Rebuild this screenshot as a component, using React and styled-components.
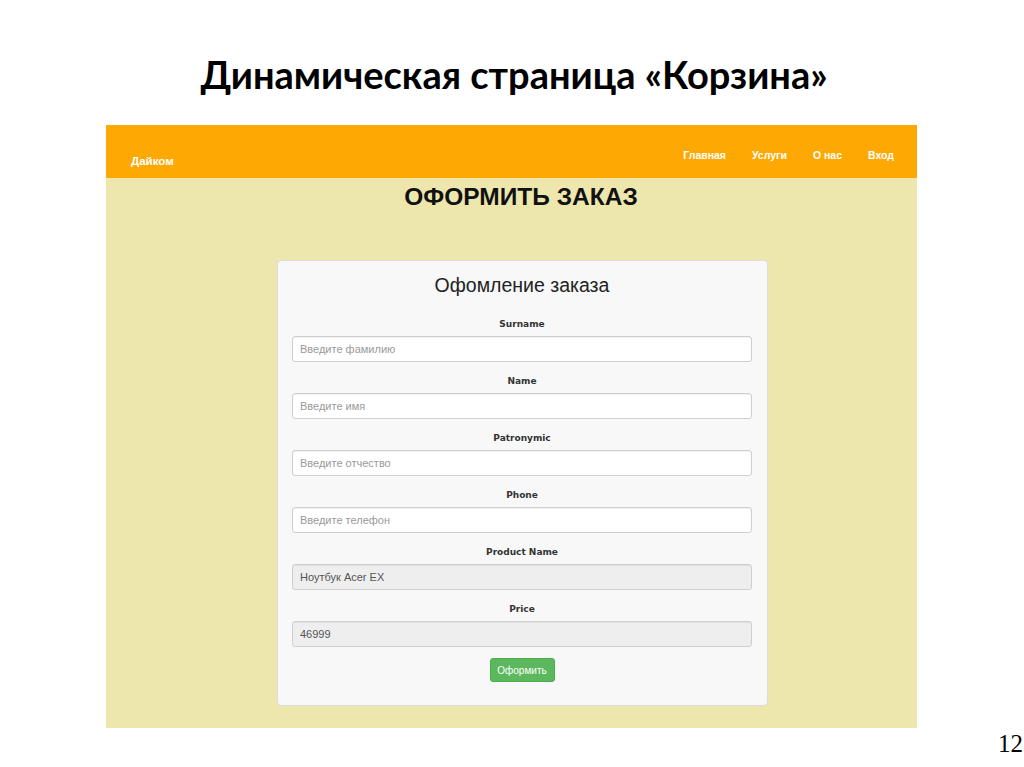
import React from "react";
import styled, { createGlobalStyle } from "styled-components";

const GlobalStyle = createGlobalStyle`
  html, body {
    margin: 0;
    padding: 0;
    background: #fff;
  }
`;

const fields = [
  { label: "Surname", placeholder: "Введите фамилию" },
  { label: "Name", placeholder: "Введите имя" },
  { label: "Patronymic", placeholder: "Введите отчество" },
  { label: "Phone", placeholder: "Введите телефон" },
  { label: "Product Name", value: "Ноутбук Acer EX", disabled: true },
  { label: "Price", value: "46999", disabled: true },
];

const links = ["Главная", "Услуги", "О нас", "Вход"];

export default function App() {
  return (
    <Slide>
      <GlobalStyle />
      <SlideTitle>Динамическая страница «Корзина»</SlideTitle>
      <Frame>
        <NavBar>
          <Brand>Дайком</Brand>
          <NavLinks>
            {links.map((l) => (
              <NavLink key={l}>{l}</NavLink>
            ))}
          </NavLinks>
        </NavBar>
        <Main>
          <PageHeading>ОФОРМИТЬ ЗАКАЗ</PageHeading>
          <Card>
            <CardTitle>Офомление заказа</CardTitle>
            {fields.map((f) => (
              <Group key={f.label}>
                <Label>{f.label}</Label>
                <Input
                  placeholder={f.placeholder}
                  defaultValue={f.value}
                  disabled={f.disabled}
                />
              </Group>
            ))}
            <SubmitButton>Оформить</SubmitButton>
          </Card>
        </Main>
      </Frame>
      <Footer>
        <PageNumber>12</PageNumber>
      </Footer>
    </Slide>
  );
}

const Slide = styled.div`
  width: 1024px;
  height: 767px;
  overflow: hidden;
  display: flex;
  flex-direction: column;
  background: #fff;
`;

const SlideTitle = styled.h1`
  margin: 53px 0 0;
  height: 43px;
  line-height: 43px;
  text-align: center;
  font-family: Lato, "Open Sans", sans-serif;
  font-weight: 700;
  font-size: 38px;
  color: #000;
  padding-left: 4px;
`;

const Frame = styled.div`
  margin: 29px 0 0 106px;
  width: 811px;
  height: 603px;
  background: #eee7ad;
  display: flex;
  flex-direction: column;
`;

const NavBar = styled.div`
  height: 53px;
  background: #fea803;
  display: flex;
  justify-content: space-between;
  align-items: flex-start;
  padding: 0 23px 0 25px;
  font-family: "Liberation Sans", Arial, sans-serif;
  font-weight: 700;
  color: #fff;
`;

const Brand = styled.div`
  padding-top: 30px;
  font-size: 11.5px;
  line-height: 12px;
`;

const NavLinks = styled.div`
  display: flex;
  gap: 26px;
  padding-top: 24px;
`;

const NavLink = styled.span`
  font-size: 10.5px;
  line-height: 12px;
`;

const Main = styled.div`
  display: flex;
  flex-direction: column;
  padding: 0 149px 0 171px;
`;

const PageHeading = styled.h2`
  margin: 4px 0 48px;
  height: 30px;
  line-height: 30px;
  text-align: center;
  font-family: "Liberation Sans", Arial, sans-serif;
  font-weight: 700;
  font-size: 24.5px;
  color: #111;
  padding-right: 3px;
`;

const Card = styled.div`
  background: #f8f8f8;
  border: 1px solid #dcdcdc;
  border-radius: 4px;
  padding: 12px 15px 23px 14px;
  display: flex;
  flex-direction: column;
`;

const CardTitle = styled.div`
  height: 24px;
  line-height: 24px;
  margin-bottom: 8px;
  text-align: center;
  font-family: "Liberation Sans", Arial, sans-serif;
  font-size: 19.5px;
  color: #222;
`;

const Group = styled.div`
  display: flex;
  flex-direction: column;
`;

const Label = styled.label`
  margin: 13px 0 6px;
  height: 12px;
  line-height: 12px;
  text-align: center;
  font-family: "DejaVu Sans", Verdana, sans-serif;
  font-weight: 700;
  font-size: 9px;
  color: #333;
`;

const Input = styled.input`
  box-sizing: border-box;
  height: 26px;
  width: 100%;
  padding: 0 7px;
  border: 1px solid #cfcfcf;
  border-radius: 3px;
  background: ${(p) => (p.disabled ? "#eeeeee" : "#fff")};
  box-shadow: inset 0 1px 1px rgba(0, 0, 0, 0.06);
  font-family: "Liberation Sans", Arial, sans-serif;
  font-size: 11px;
  color: #555;
  outline: none;

  &::placeholder {
    color: #9a9a9a;
  }
`;

const SubmitButton = styled.button`
  align-self: center;
  margin-top: 11px;
  width: 65px;
  height: 24px;
  background: #5cb85c;
  border: 1px solid #4cae4c;
  border-radius: 3px;
  color: #fff;
  font-family: "Liberation Sans", Arial, sans-serif;
  font-size: 10px;
  padding: 0;
  cursor: pointer;
`;

const Footer = styled.div`
  display: flex;
  justify-content: flex-end;
  padding-right: 1px;
`;

const PageNumber = styled.span`
  font-family: "Liberation Serif", "Times New Roman", serif;
  font-size: 25px;
  line-height: 31px;
  color: #000;
`;
